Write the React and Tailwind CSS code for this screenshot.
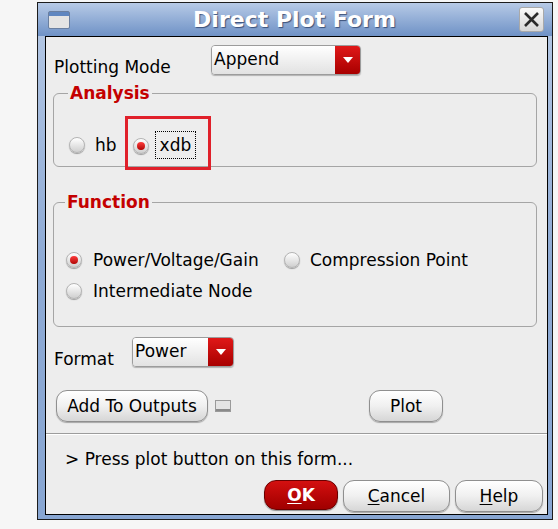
import React from "react";

const font = { fontFamily: "'DejaVu Sans', 'Noto Sans', sans-serif" };

const Radio = ({ checked }) => (
  <span className="relative inline-flex h-[16px] w-[16px] shrink-0 items-center justify-center rounded-full border border-[#b4b4b4] bg-gradient-to-b from-[#ffffff] to-[#cfcfcf] shadow-[0_1px_1px_rgba(0,0,0,0.35)]">
    {checked && <span className="h-[8px] w-[8px] rounded-full bg-gradient-to-b from-[#ff3b3b] to-[#b00000]" />}
  </span>
);

const Dropdown = ({ value, width }) => (
  <div className={`flex h-[30px] ${width} overflow-hidden rounded-[4px] border border-[#9c9c9c] shadow-[0_1px_1px_rgba(0,0,0,0.25)]`}>
    <div className="flex flex-1 items-start bg-gradient-to-b from-[#ffffff] to-[#e2e2e2] pl-[2px] pt-[3px] text-[17px] leading-[20px] text-black">
      {value}
    </div>
    <div className="flex w-[25px] items-center justify-center bg-gradient-to-b from-[#e01818] to-[#a80000]">
      <svg width="10" height="7" viewBox="0 0 10 7">
        <path d="M0 0 L10 0 L5 6 Z" fill="#ffffff" />
      </svg>
    </div>
  </div>
);

const Button = ({ children, className = "" }) => (
  <button
    className={`flex h-[32px] items-center justify-center rounded-[11px] border border-[#8f8f8f] bg-gradient-to-b from-[#ffffff] via-[#f0f0f0] to-[#d6d6d6] text-[17px] leading-[20px] text-black shadow-[0_1px_1px_rgba(0,0,0,0.3)] ${className}`}
  >
    {children}
  </button>
);

export default function App() {
  return (
    <div className="min-h-screen bg-[#f6f6f6] pl-[37px] pt-[2px]" style={font}>
      <div className="flex h-[518px] w-[516px] flex-col border border-[#1c1c1c] bg-gradient-to-b from-[#b6c9e5] via-[#8eaad4] to-[#88a6d2]">
        {/* title bar */}
        <div className="flex h-[33px] items-center bg-gradient-to-b from-[#b7cae6] to-[#6f92c6] pl-[10px] pr-[8px]">
          <div className="h-[18px] w-[22px] rounded-[2px] border border-[#6a7fa0] bg-gradient-to-b from-[#5f86c0] from-[22%] to-[#e4e4e4] to-[22%]" />
          <div className="flex-1 text-center text-[22px] font-bold leading-[26px] text-white [text-shadow:1px_1px_1px_rgba(40,60,100,0.8)]">
            Direct Plot Form
          </div>
          <div className="flex h-[25px] w-[25px] items-center justify-center rounded-[3px] border border-[#a9a9a9] bg-gradient-to-b from-[#fafafa] to-[#d7d7d7]">
            <svg width="17" height="17" viewBox="0 0 17 17">
              <path d="M2 2 L15 15 M15 2 L2 15" stroke="#2b2b2b" strokeWidth="2.6" />
            </svg>
          </div>
        </div>

        {/* body */}
        <div className="mb-[4px] ml-[7px] mr-[4px] flex flex-1 flex-col border border-black bg-[#ededed]">
          {/* plotting mode */}
          <div className="mt-[8px] flex items-start pl-[8px]">
            <div className="mt-[12px] w-[157px] text-[17px] leading-[20px] text-black">Plotting Mode</div>
            <Dropdown value="Append" width="w-[150px]" />
          </div>

          {/* analysis */}
          <div className="relative ml-[7px] mt-[7px] w-[484px]">
            <fieldset className="h-[83px] rounded-[6px] border border-[#a5a5a5] px-[15px]">
              <legend className="ml-[-1px] px-[2px] text-[17px] font-bold leading-[18px] text-[#c40000]">Analysis</legend>
              <div className="mt-[29px] flex items-center">
                <Radio />
                <span className="ml-[10px] text-[17px] leading-[20px] text-black">hb</span>
                <span className="ml-[16px]">
                  <Radio checked />
                </span>
                <span className="ml-[6px] border border-dotted border-black px-[4px] text-[17px] leading-[26px] text-black">
                  xdb
                </span>
              </div>
            </fieldset>
            <div className="pointer-events-none absolute left-[72px] top-[32px] h-[54px] w-[86px] border-[3px] border-[#e0202a]" />
          </div>

          {/* function */}
          <div className="ml-[7px] mt-[26px] w-[484px]">
            <fieldset className="h-[134px] rounded-[6px] border border-[#a5a5a5] px-[12px]">
              <legend className="ml-[-1px] px-[2px] text-[17px] font-bold leading-[18px] text-[#c40000]">Function</legend>
              <div className="mt-[39px] flex items-center">
                <Radio checked />
                <span className="ml-[11px] w-[191px] text-[17px] leading-[20px] text-black">Power/Voltage/Gain</span>
                <Radio />
                <span className="ml-[10px] text-[17px] leading-[20px] text-black">Compression Point</span>
              </div>
              <div className="mt-[11px] flex items-center">
                <Radio />
                <span className="ml-[11px] text-[17px] leading-[20px] text-black">Intermediate Node</span>
              </div>
            </fieldset>
          </div>

          {/* format */}
          <div className="mt-[10px] flex items-start pl-[8px]">
            <div className="mt-[12px] w-[78px] text-[17px] leading-[20px] text-black">Format</div>
            <Dropdown value="Power" width="w-[102px]" />
          </div>

          {/* add / plot */}
          <div className="mt-[21px] flex items-center pl-[10px]">
            <Button className="w-[152px]">Add To Outputs</Button>
            <div className="ml-[7px] h-[12px] w-[16px] border border-[#9a9a9a] bg-[#e4e4e4] shadow-[inset_0_-2px_0_#8a8a8a]" />
            <Button className="ml-[138px] w-[74px]">Plot</Button>
          </div>

          {/* separator */}
          <div className="mt-[11px] h-[2px] border-t border-[#9c9c9c] bg-[#ffffff]" />

          {/* status */}
          <div className="mt-[14px] pl-[19px] text-[17px] leading-[20px] text-black">&gt; Press plot button on this form...</div>

          {/* bottom buttons */}
          <div className="mt-[11px] flex justify-end gap-[5px] pr-[4px]">
            <button className="flex h-[30px] w-[74px] items-center justify-center rounded-[12px] border border-[#6a0000] bg-gradient-to-b from-[#d41010] to-[#a00000] text-[17px] font-bold leading-[20px] text-white shadow-[0_1px_1px_rgba(0,0,0,0.4)]">
              <span className="underline underline-offset-2">O</span>K
            </button>
            <Button className="h-[30px] w-[107px]">
              <span className="underline underline-offset-2">C</span>ancel
            </Button>
            <Button className="h-[30px] w-[88px]">
              <span className="underline underline-offset-2">H</span>elp
            </Button>
          </div>
        </div>
      </div>
    </div>
  );
}
